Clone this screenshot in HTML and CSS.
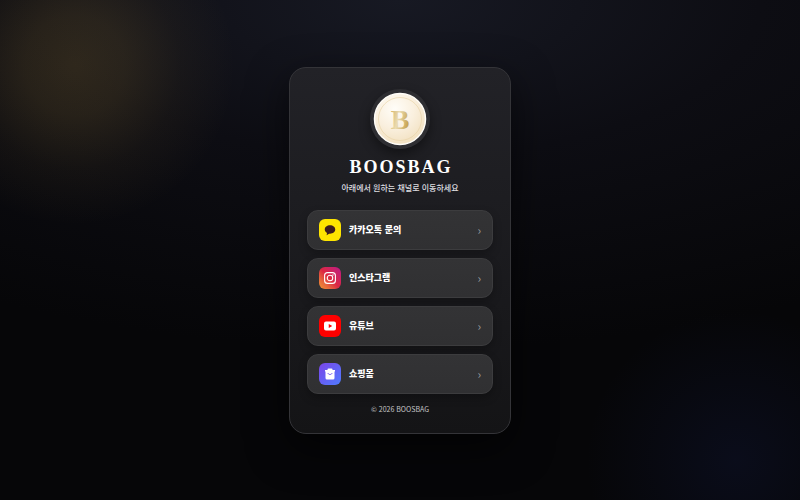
FILE: index.html
```
<!DOCTYPE html>
<html lang="ko">
<head>
  <meta charset="UTF-8">
  <meta name="viewport" content="width=device-width, initial-scale=1.0">
  <title>BOOSBAG</title>
  <link rel="stylesheet" href="styles.css">
</head>
<body>

  <main class="card">
    <div class="logo">
      <svg viewBox="0 0 54 54" aria-hidden="true">
        <defs>
          <radialGradient id="coin" cx="40%" cy="30%" r="75%">
            <stop offset="0" stop-color="#fffdf8" />
            <stop offset="0.5" stop-color="#faf0df" />
            <stop offset="1" stop-color="#f1dfbd" />
          </radialGradient>
          <linearGradient id="gold" x1="0" y1="0" x2="1" y2="0.4">
            <stop offset="0" stop-color="#d0ad62" />
            <stop offset="0.5" stop-color="#eadbb0" />
            <stop offset="1" stop-color="#c9a655" />
          </linearGradient>
        </defs>
        <circle cx="27" cy="27" r="25.5" fill="url(#coin)" stroke="#fffdf8" stroke-width="1.5" />
        <circle cx="27" cy="27" r="21.5" fill="none" stroke="#e5d0a1" stroke-width="0.6" />
        <text class="logo-letter" x="27" y="37" text-anchor="middle" fill="url(#gold)">B</text>
      </svg>
    </div>

    <h1 class="title">BOOSBAG</h1>
    <p class="subtitle">아래에서 원하는 채널로 이동하세요</p>

    <nav class="links">
      <a class="link" href="#">
        <span class="icon kakao">
          <svg viewBox="0 0 24 24" aria-hidden="true">
            <path fill="#3c1e1e" d="M12 2.5C6 2.5 1.5 6.3 1.5 11c0 3 1.8 5.500 4.500 7L5.200 22.500l5-3.200c.6.1 1.200.1 1.800.1 6 0 10.500-3.700 10.500-8.400S18 2.500 12 2.500z" />
          </svg>
        </span>
        <span class="label">카카오톡 문의</span>
        <span class="arrow">›</span>
      </a>

      <a class="link" href="#">
        <span class="icon instagram">
          <svg viewBox="0 0 24 24" fill="none" stroke="#ffffff" stroke-width="2.2" aria-hidden="true">
            <rect x="1.2" y="1.2" width="21.6" height="21.6" rx="6" />
            <circle cx="12" cy="12" r="5.5" />
            <circle cx="18" cy="6" r="1.4" fill="#ffffff" stroke="none" />
          </svg>
        </span>
        <span class="label">인스타그램</span>
        <span class="arrow">›</span>
      </a>

      <a class="link" href="#">
        <span class="icon youtube">
          <svg viewBox="0 0 24 24" aria-hidden="true">
            <path fill="#ffffff" fill-rule="evenodd" d="M4 3h16q4 0 4 4v10q0 4-4 4H4q-4 0-4-4V7q0-4 4-4zM9.5 8v8l7-4z" />
          </svg>
        </span>
        <span class="label">유튜브</span>
        <span class="arrow">›</span>
      </a>

      <a class="link" href="#">
        <span class="icon shop">
          <svg viewBox="0 0 24 24" aria-hidden="true">
            <path fill="#ffffff" d="M7 4V3q0-2 2-2h6q2 0 2 2v1h5v3h-1v13q0 3-3 3H6q-3 0-3-3V7H2V4z" />
            <path fill="none" stroke="#7057f2" stroke-width="2" d="M8 10c.5 4 7.500 4 8 0" />
          </svg>
        </span>
        <span class="label">쇼핑몰</span>
        <span class="arrow">›</span>
      </a>
    </nav>

    <footer class="footer">© 2026 BOOSBAG</footer>
  </main>

</body>
</html>
```
FILE: styles.css
```
* {
  box-sizing: border-box;
}

body {
  margin: 0;
  min-height: 100vh;
  display: flex;
  align-items: center;
  justify-content: center;
  font-family: "Noto Sans CJK KR", sans-serif;
  color: #ffffff;
  background:
    radial-gradient(circle at 75px 65px, rgba(200, 160, 70, 0.18) 0, rgba(200, 160, 70, 0.14) 50px, rgba(200, 160, 70, 0.05) 105px, transparent 160px),
    radial-gradient(circle at 92% 92%, rgba(40, 60, 160, 0.12), transparent 150px),
    radial-gradient(ellipse 100% 70% at 50% 0, #171923 0, #0d0d13 45%, transparent 100%),
    #060608;
}

.card {
  width: 222px;
  padding: 21px 17px 18px;
  border: 1px solid #343438;
  border-radius: 17px;
  background: linear-gradient(#222227, #141416);
  box-shadow: 0 14px 40px rgba(0, 0, 0, 0.6);
  text-align: center;
}

/* Logo */
.logo {
  width: 60px;
  height: 60px;
  margin: 0 auto;
  padding: 3px;
  border-radius: 50%;
  background: #2e2e32;
  box-shadow: 0 5px 12px rgba(0, 0, 0, 0.4);
}

.logo svg {
  display: block;
  width: 100%;
}

.logo-letter {
  font-family: "Liberation Serif", serif;
  font-size: 28px;
  font-weight: bold;
}

.title {
  margin: 7px 0 0;
  font-family: "Liberation Serif", serif;
  font-size: 18px;
  line-height: 22px;
  letter-spacing: 2px;
  text-indent: 2px;
}

.subtitle {
  margin: 4px 0 16px;
  font-size: 8px;
  line-height: 12px;
  font-weight: 500;
  color: #dedee0;
}

/* Channel buttons */
.links {
  display: flex;
  flex-direction: column;
  gap: 8px;
}

.link {
  display: flex;
  align-items: center;
  gap: 8px;
  height: 40px;
  padding: 0 11px;
  border: 1px solid #3c3c3e;
  border-radius: 11px;
  background: linear-gradient(#333335, #303032);
  box-shadow: 0 4px 8px rgba(0, 0, 0, 0.25);
  color: #ffffff;
  text-decoration: none;
}

.icon {
  display: flex;
  align-items: center;
  justify-content: center;
  width: 22px;
  height: 22px;
  border-radius: 6px;
}

.icon svg {
  width: 12px;
  height: 12px;
}

.kakao {
  background: #fee500;
}

.instagram {
  background: linear-gradient(45deg, #f09433, #e6683c 25%, #dc2743 50%, #cc2366 75%, #bc1888);
}

.youtube {
  background: #ff0000;
}

.shop {
  background: linear-gradient(135deg, #7b45e8, #4f7cff);
}

.label {
  flex: 1;
  text-align: left;
  font-size: 9px;
  line-height: 14px;
  font-weight: 900;
}

.arrow {
  font-size: 12px;
  line-height: 14px;
  color: #98989a;
}

.footer {
  margin-top: 9px;
  font-size: 7px;
  line-height: 12px;
  color: #c4c4c6;
}
```
